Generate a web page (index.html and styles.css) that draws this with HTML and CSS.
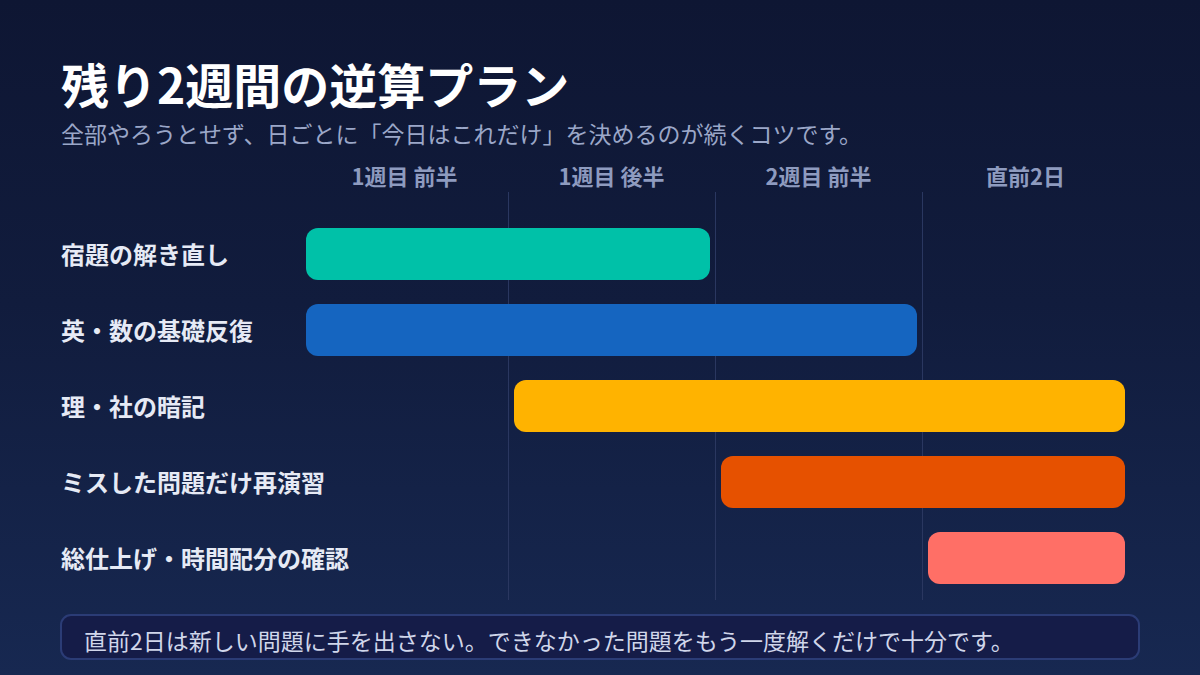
FILE: index.html
```html
<!DOCTYPE html>
<html lang="ja">
<head>
<meta charset="utf-8">
<title>残り2週間の逆算プラン</title>
<link rel="stylesheet" href="styles.css">
</head>
<body>
<main class="slide">
  <h1 class="title">残り2週間の逆算プラン</h1>
  <p class="subtitle">全部やろうとせず、日ごとに「今日はこれだけ」を決めるのが続くコツです。</p>

  <section class="chart">
    <div class="chart-head">
      <span class="head-spacer"></span>
      <span class="col-label">1週目 前半</span>
      <span class="col-label">1週目 後半</span>
      <span class="col-label">2週目 前半</span>
      <span class="col-label">直前2日</span>
    </div>

    <div class="chart-body">
      <div class="grid-line l3"></div>
      <div class="grid-line l4"></div>
      <div class="grid-line l5"></div>

      <div class="row-label r1">宿題の解き直し</div>
      <div class="bar teal r1 s2 e4"></div>

      <div class="row-label r2">英・数の基礎反復</div>
      <div class="bar blue r2 s2 e5"></div>

      <div class="row-label r3">理・社の暗記</div>
      <div class="bar amber r3 s3 e6"></div>

      <div class="row-label r4">ミスした問題だけ再演習</div>
      <div class="bar orange r4 s4 e6"></div>

      <div class="row-label r5">総仕上げ・時間配分の確認</div>
      <div class="bar coral r5 s5 e6"></div>
    </div>
  </section>

  <p class="note">直前2日は新しい問題に手を出さない。できなかった問題をもう一度解くだけで十分です。</p>
</main>
</body>
</html>
```

FILE: styles.css
```css
* {
  box-sizing: border-box;
}

html, body {
  margin: 0;
  padding: 0;
}

body {
  width: 1200px;
  height: 675px;
  overflow: hidden;
  background: linear-gradient(180deg, #0e1633 0%, #111c3d 45%, #172851 100%);
  font-family: "Noto Sans CJK JP", "Noto Sans", sans-serif;
  color: #e6eaf5;
}

.slide {
  padding: 54px 60px 0 60px;
  display: flex;
  flex-direction: column;
}

.title {
  margin: 0;
  font-size: 48px;
  line-height: 58px;
  font-weight: 700;
  color: #ffffff;
  padding-left: 1px;
}

.subtitle {
  margin: 6px 0 0 0;
  font-size: 23px;
  line-height: 30px;
  font-weight: 400;
  color: #9ba7c8;
  padding-left: 1px;
}

.chart {
  margin-top: 12px;
  display: flex;
  flex-direction: column;
}

.chart-head {
  display: grid;
  grid-template-columns: 241px repeat(4, 207px);
  height: 32px;
}

.col-label {
  text-align: center;
  font-size: 22px;
  line-height: 30px;
  font-weight: 700;
  color: #8e9bbf;
}

.chart-body {
  display: grid;
  grid-template-columns: 241px repeat(4, 207px);
  grid-template-rows: 24px repeat(5, 76px) 4px;
}

.grid-line {
  grid-row: 1 / -1;
  border-left: 1px solid #2a3760;
}

.l3 { grid-column: 3; }
.l4 { grid-column: 4; }
.l5 { grid-column: 5; }

.row-label {
  grid-column: 1;
  align-self: center;
  font-size: 24px;
  line-height: 32px;
  font-weight: 700;
  color: #e6eaf5;
  white-space: nowrap;
  padding-left: 1px;
}

.r1 { grid-row: 2; }
.r2 { grid-row: 3; }
.r3 { grid-row: 4; }
.r4 { grid-row: 5; }
.r5 { grid-row: 6; }

.s2 { grid-column-start: 2; }
.s3 { grid-column-start: 3; }
.s4 { grid-column-start: 4; }
.s5 { grid-column-start: 5; }
.e4 { grid-column-end: 4; }
.e5 { grid-column-end: 5; }
.e6 { grid-column-end: 6; }

.bar {
  align-self: center;
  height: 52px;
  margin: 0 5px 0 6px;
  border-radius: 12px;
  position: relative;
  z-index: 1;
}

.s2.bar { margin-left: 5px; }
.e6.bar { margin-right: 4px; }

.teal { background: #00c1a8; }
.blue { background: #1565c0; }
.amber { background: #ffb300; }
.orange { background: #e65100; }
.coral { background: #ff6f66; }

.note {
  margin: 14px 0 0 0;
  height: 46px;
  padding: 8px 20px 2px 22px;
  border: 2px solid #2b3c76;
  border-radius: 11px;
  background: #151c48;
  font-size: 23px;
  line-height: 32px;
  color: #d0d6ea;
  white-space: nowrap;
}
```
